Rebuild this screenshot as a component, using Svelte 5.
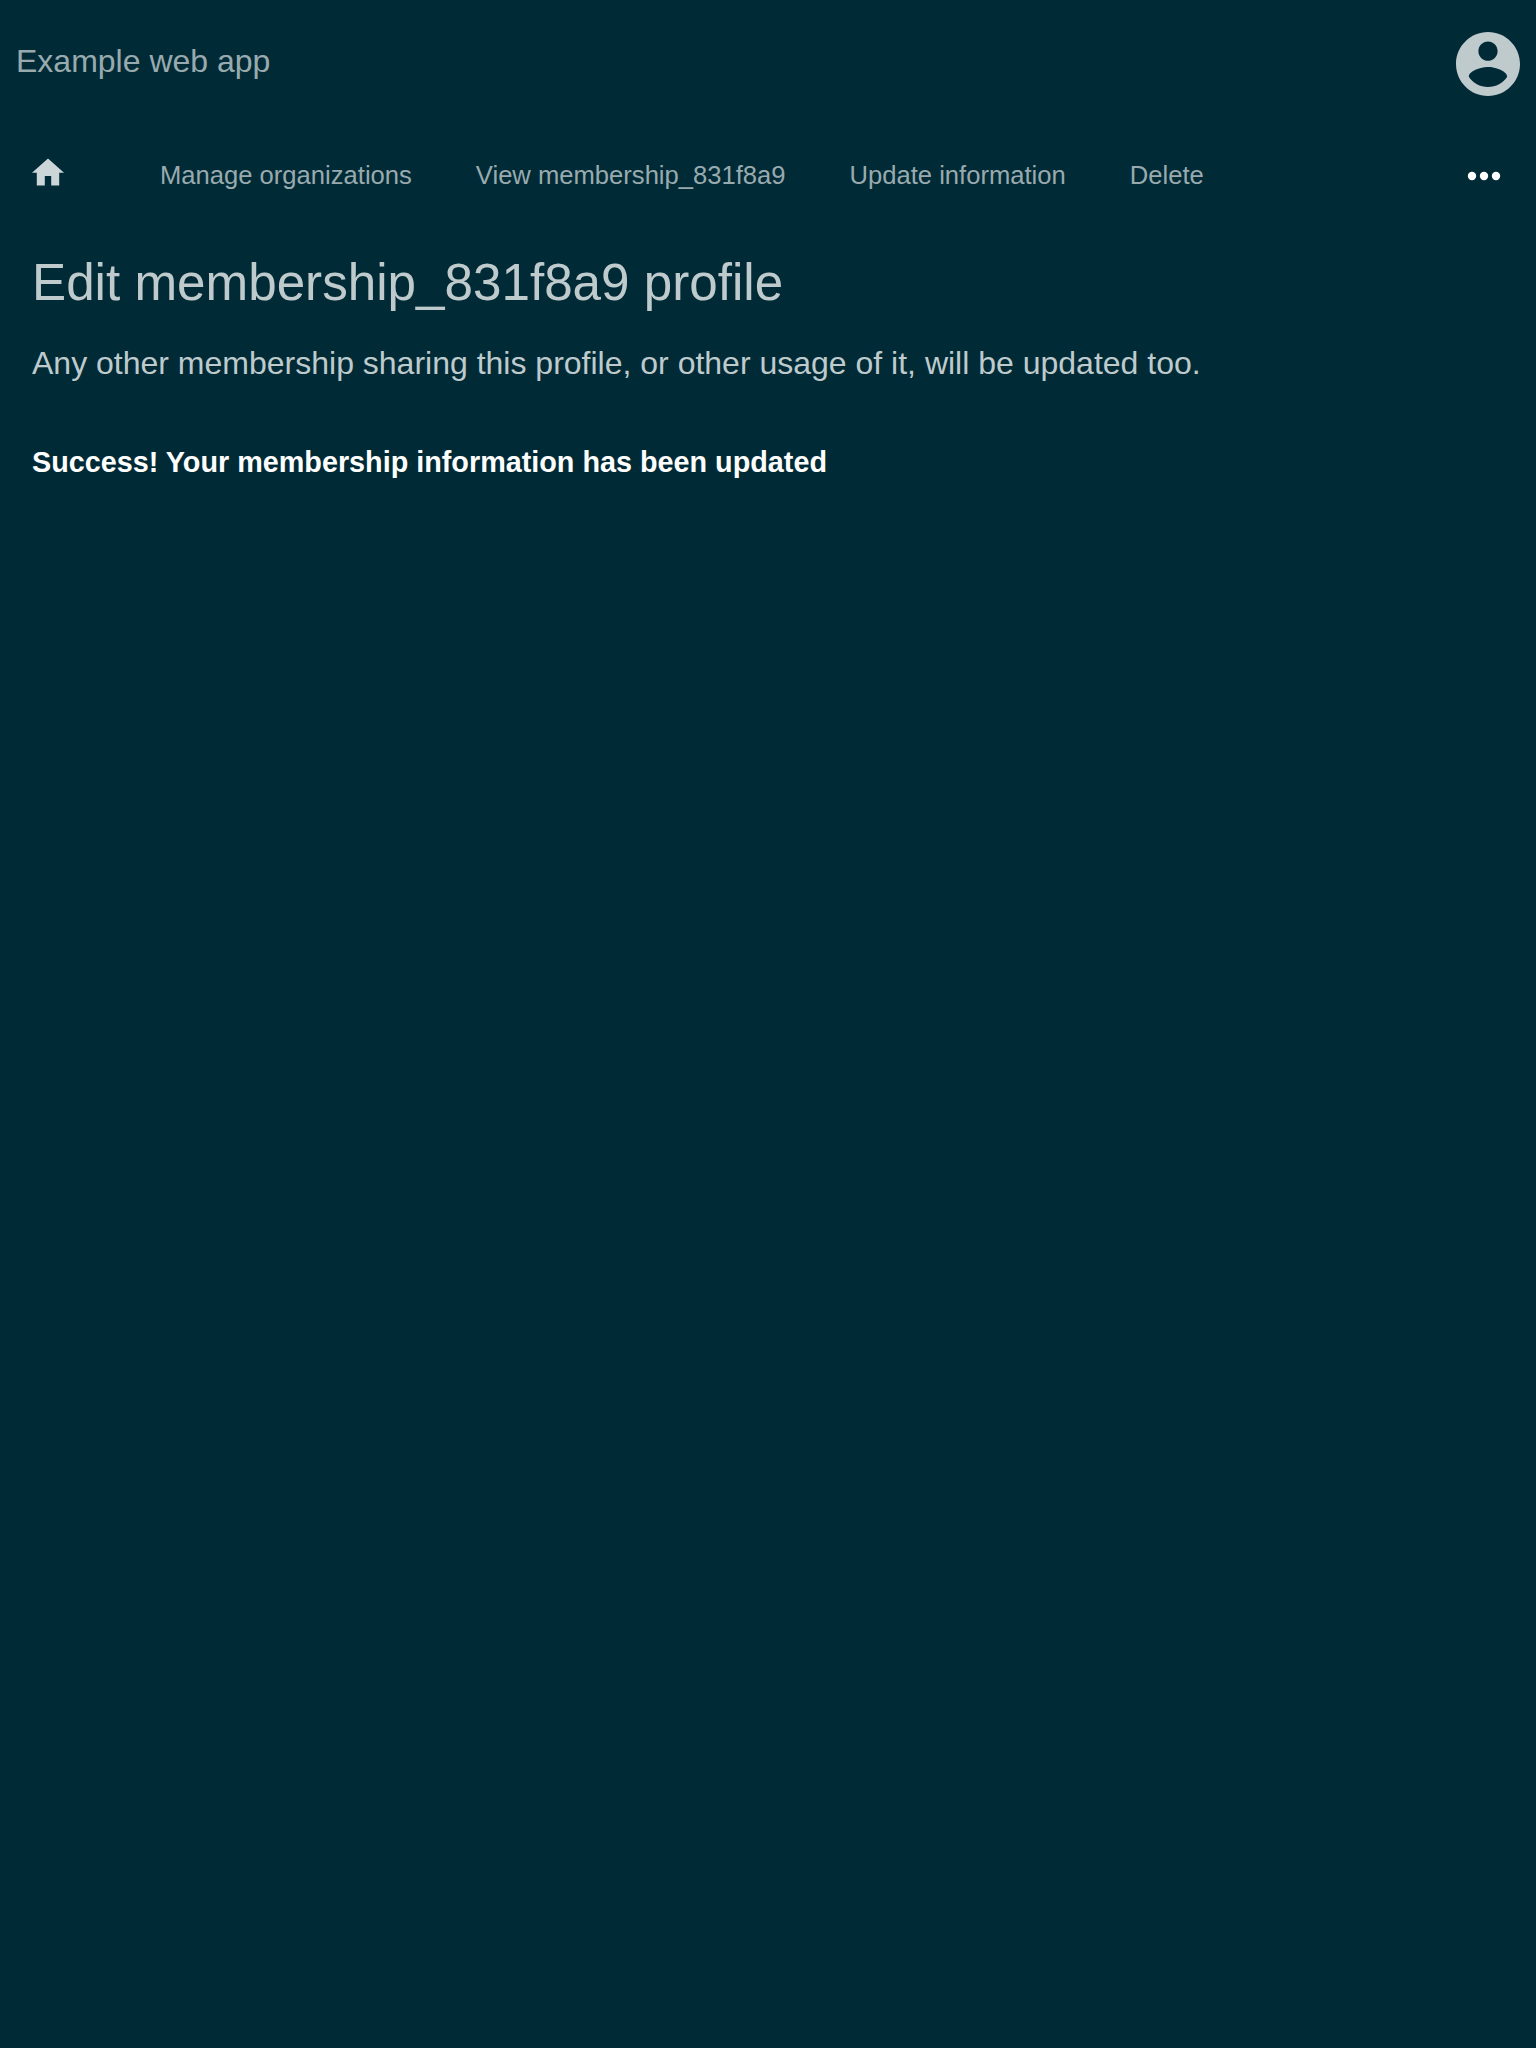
<script>
  const links = ['Manage organizations', 'View membership_831f8a9', 'Update information', 'Delete'];
</script>

<div class="page">
  <header>
    <span class="brand">Example web app</span>
    <svg class="account" viewBox="2 2 20 20" aria-label="Account">
      <path d="M12 2C6.48 2 2 6.48 2 12s4.48 10 10 10 10-4.48 10-10S17.52 2 12 2zm0 3c1.66 0 3 1.34 3 3s-1.34 3-3 3-3-1.34-3-3 1.34-3 3-3zm0 14.2c-2.5 0-4.71-1.28-6-3.22.03-1.99 4-3.08 6-3.08 1.99 0 5.97 1.09 6 3.08-1.29 1.94-3.5 3.22-6 3.22z" />
    </svg>
  </header>
  <nav>
    <svg class="home" viewBox="2 2.75 20 17.5" aria-label="Home">
      <path d="M10 20v-6h4v6h5v-8h3L12 3 2 12h3v8z" />
    </svg>
    <div class="links">
      {#each links as link}
        <a href="#top">{link}</a>
      {/each}
    </div>
    <svg class="more" viewBox="0 0 32 8" aria-label="More">
      <circle cx="4" cy="4" r="4.2" />
      <circle cx="16" cy="4" r="4.2" />
      <circle cx="28" cy="4" r="4.2" />
    </svg>
  </nav>
  <main>
    <h1>Edit membership_831f8a9 profile</h1>
    <p class="note">Any other membership sharing this profile, or other usage of it, will be updated too.</p>
    <p class="success">Success! Your membership information has been updated</p>
  </main>
</div>

<style>
  :global(body) {
    background: #002b36;
  }
  .page {
    min-height: 2048px;
    box-sizing: border-box;
    font-family: 'Liberation Sans', Arial, sans-serif;
    color: #bfcacd;
    background: #002b36;
  }
  header {
    display: flex;
    justify-content: space-between;
    height: 128px;
    padding: 32px 16px 0;
    box-sizing: border-box;
  }
  .brand {
    margin-top: 11px;
    font-size: 32px;
    line-height: 36px;
    color: #99aaaf;
  }
  .account {
    width: 64px;
    height: 64px;
    fill: #bfcacd;
  }
  nav {
    display: flex;
    align-items: flex-start;
    height: 96px;
    padding: 0 36px 0 32px;
    box-sizing: border-box;
  }
  .home {
    width: 32px;
    height: 28px;
    margin-top: 30px;
    fill: #ccd5d7;
  }
  .links {
    display: flex;
    gap: 64px;
    margin: 32px 0 0 96px;
    font-size: 25.6px;
    line-height: 30px;
  }
  a {
    color: #99aaaf;
    text-decoration: none;
    white-space: nowrap;
  }
  .more {
    width: 32px;
    height: 8px;
    margin: 44px 0 0 auto;
    overflow: visible;
    fill: #fff;
  }
  main {
    padding: 0 32px;
  }
  h1 {
    margin: 0;
    padding-top: 29px;
    font-size: 51.2px;
    line-height: 60px;
    font-weight: 400;
  }
  p {
    margin: 0;
  }
  .note {
    margin-top: 32px;
    font-size: 32px;
    line-height: 36px;
  }
  .success {
    margin-top: 64px;
    font-size: 28.78px;
    line-height: 34px;
    font-weight: 700;
    color: #fff;
  }
</style>
